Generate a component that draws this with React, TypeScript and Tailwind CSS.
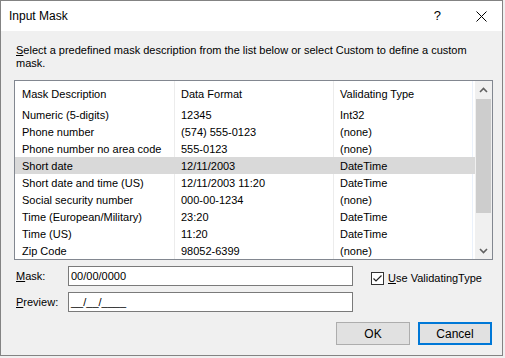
import React from 'react'

const rows = [
  ['Numeric (5-digits)', '12345', 'Int32'],
  ['Phone number', '(574) 555-0123', '(none)'],
  ['Phone number no area code', '555-0123', '(none)'],
  ['Short date', '12/11/2003', 'DateTime'],
  ['Short date and time (US)', '12/11/2003 11:20', 'DateTime'],
  ['Social security number', '000-00-1234', '(none)'],
  ['Time (European/Military)', '23:20', 'DateTime'],
  ['Time (US)', '11:20', 'DateTime'],
  ['Zip Code', '98052-6399', '(none)'],
]

function Chevron({ up }: { up?: boolean }) {
  return (
    <svg width="9" height="6" viewBox="0 0 9 6" className="block">
      <path
        d={up ? 'M1 5 L4.5 1.5 L8 5' : 'M1 1 L4.5 4.5 L8 1'}
        fill="none"
        stroke="#606060"
        strokeWidth="1.6"
      />
    </svg>
  )
}

function MaskList() {
  return (
    <div className="ml-[13px] flex h-[180px] w-[479px] overflow-hidden border border-[#828790] bg-white">
      <div className="relative flex-1">
        <div className="absolute top-0 bottom-0 left-[159px] w-px bg-[#ececec]" />
        <div className="absolute top-0 bottom-0 left-[318px] w-px bg-[#ececec]" />
        <div className="absolute top-0 bottom-0 right-[2px] w-px bg-[#eaf1fb]" />
        <div className="flex h-[25px] items-center pt-px">
          <div className="w-[159px] pl-[7px]">Mask Description</div>
          <div className="w-[159px] pl-[7px]">Data Format</div>
          <div className="flex-1 pl-[7px]">Validating Type</div>
        </div>
        {rows.map(([a, b, c], i) => (
          <div
            key={a}
            className={`relative flex h-[17px] items-center pt-px ${i === 3 ? 'bg-[#d9d9d9]' : ''}`}
          >
            <div className="w-[159px] pl-[7px] whitespace-nowrap">{a}</div>
            <div className="w-[159px] pl-[7px] whitespace-nowrap">{b}</div>
            <div className="flex-1 pl-[7px] whitespace-nowrap">{c}</div>
          </div>
        ))}
      </div>
      <div className="flex w-[17px] flex-col bg-[#f0f0f0]">
        <div className="flex h-[18px] items-center justify-center">
          <Chevron up />
        </div>
        <div className="mx-[1px] h-[114px] bg-[#cdcdcd]" />
        <div className="flex-1" />
        <div className="flex h-[17px] items-center justify-center">
          <Chevron />
        </div>
      </div>
    </div>
  )
}

export default function App() {
  return (
    <div className="h-[358px] w-[505px] bg-[#f0f0f0] font-['Liberation_Sans',sans-serif] text-[11px] text-black">
      <div className="flex h-[356px] w-[503px] flex-col border border-[#838383] bg-[#f0f0f0]">
        <div className="flex h-[30px] items-center bg-white pl-[8px] pr-[15px] text-[12px]">
          <span className="flex-1">Input Mask</span>
          <span className="mr-[35px] text-[13px]">?</span>
          <svg width="11" height="11" viewBox="0 0 11 11">
            <path d="M0.5 0.5 L10.5 10.5 M10.5 0.5 L0.5 10.5" stroke="#000" strokeWidth="1" />
          </svg>
        </div>

        <p className="w-[475px] pl-[15px] pt-[13px] leading-[13px] first-letter:underline">
          Select a predefined mask description from the list below or select Custom to define a custom mask.
        </p>

        <div className="mt-[10px]">
          <MaskList />
        </div>

        <div className="mt-[6px] flex items-start pl-[15px]">
          <div className="flex flex-col gap-[6px]">
            <div className="flex items-center">
              <label className="w-[52px] first-letter:underline">Mask:</label>
              <div className="flex h-[20px] w-[285px] items-center border border-[#7a7a7a] bg-white pl-[2px]">
                00/00/0000
              </div>
            </div>
            <div className="flex items-center">
              <label className="w-[52px] first-letter:underline">Preview:</label>
              <div className="flex h-[20px] w-[285px] items-center border border-[#7a7a7a] bg-white pl-[2px]">
                __/__/____
              </div>
            </div>
          </div>
          <div className="ml-[18px] mt-[4px] flex items-center gap-[4px]">
            <div className="flex h-[13px] w-[13px] items-center justify-center border border-[#333] bg-white">
              <svg width="11" height="11" viewBox="0 0 11 11">
                <path d="M1.5 5.5 L4 8 L9.5 2.5" fill="none" stroke="#222" strokeWidth="1.2" />
              </svg>
            </div>
            <span className="first-letter:underline">Use ValidatingType</span>
          </div>
        </div>

        <div className="mt-[10px] flex justify-end gap-[8px] pr-[10px] text-[12px]">
          <button className="h-[23px] w-[74px] border border-[#adadad] bg-[#e1e1e1]">OK</button>
          <button className="h-[23px] w-[74px] border-2 border-[#0078d7] bg-[#e1e1e1]">Cancel</button>
        </div>
      </div>
    </div>
  )
}
